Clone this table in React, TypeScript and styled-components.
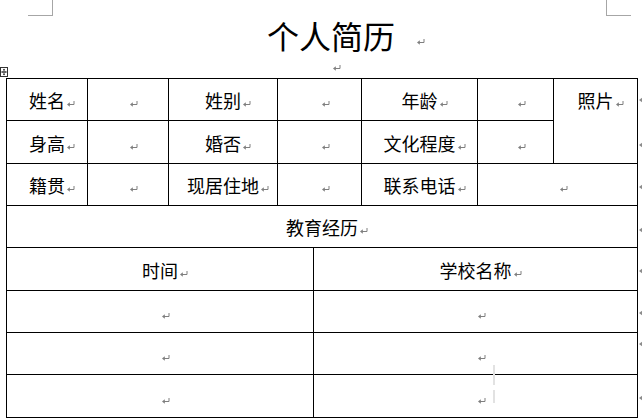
import React from "react";
import styled, { createGlobalStyle } from "styled-components";

const GlobalStyle = createGlobalStyle`
  html, body { margin: 0; padding: 0; background: #ffffff; }
  body { font-family: "Noto Sans CJK SC", "Noto Sans", sans-serif; color: #000; }
  * { box-sizing: border-box; }
`;

const Page = styled.div`
  position: relative;
  width: 642px;
  height: 418px;
  overflow: hidden;
  background: #ffffff;
`;

const CropMark = styled.div<{ $side: "left" | "right" }>`
  position: absolute;
  top: 0;
  width: 25px;
  height: 16px;
  border-bottom: 1px solid #a6a6a6;
  ${(p) =>
    p.$side === "left"
      ? "left: 28px; border-right: 1px solid #a6a6a6;"
      : "left: 606px; border-left: 1px solid #a6a6a6;"}
`;

const Header = styled.div`
  padding: 19px 0 0 20px;
  text-align: center;
`;

const Title = styled.h1`
  margin: 0;
  font-size: 32px;
  line-height: 32px;
  font-weight: 400;
  font-family: "Noto Sans CJK SC", sans-serif;
`;

const BlankLine = styled.div`
  height: 27px;
  font-size: 18px;
  line-height: 27px;
`;

const MarkSvg = styled.svg<{ $gap: number }>`
  display: inline-block;
  width: 8px;
  height: 6px;
  margin-left: ${(p) => p.$gap}px;
  margin-right: ${(p) => -(8 + p.$gap)}px;
  vertical-align: ${(p) => (p.$gap > 10 ? "4px" : "1px")};
`;

const Mark = ({ gap = 2 }: { gap?: number }) => (
  <MarkSvg $gap={gap} viewBox="0 0 8 6">
    <path d="M7 0 V3.5 H2" stroke="#7f7f7f" strokeWidth="1" fill="none" />
    <path d="M0 3.5 L2.8 1.2 L2.8 5.8 Z" fill="#7f7f7f" />
  </MarkSvg>
);

const Table = styled.div`
  margin-left: 6px;
  width: 632px;
  border-left: 1px solid #000;
`;

const InfoGrid = styled.div`
  display: grid;
  grid-template-columns: 81px 81px 109px 84px 116px 76px 84px;
  grid-template-rows: 42px 43px 42px;
  border-top: 1px solid #000;
`;

const EduGrid = styled.div`
  display: grid;
  grid-template-columns: 307px 324px;
  grid-template-rows: 42px 43px 42px 42px 43px;
`;

const Cell = styled.div<{ $span?: string; $rows?: number }>`
  display: flex;
  align-items: center;
  justify-content: center;
  border-right: 1px solid #000;
  border-bottom: 1px solid #000;
  font-size: 18px;
  line-height: 18px;
  padding-top: 1px;
  ${(p) => (p.$span ? `grid-column: ${p.$span};` : "")}
  ${(p) => (p.$rows ? `grid-row: span ${p.$rows}; align-items: flex-start; padding-top: 12px;` : "")}
`;

const CellText = styled.span`
  display: inline-block;
  white-space: nowrap;
`;

const TableHandle = styled.svg`
  position: absolute;
  left: 0;
  top: 67px;
  width: 8px;
  height: 10px;
`;

const RowEnd = styled.div<{ $y: number }>`
  position: absolute;
  left: 639px;
  top: ${(p) => p.$y}px;
  width: 0;
  height: 0;
  border-top: 3px solid transparent;
  border-bottom: 3px solid transparent;
  border-right: 4px solid #8c8c8c;
`;

const Caret = styled.div<{ $y: number; $h: number }>`
  position: absolute;
  left: 493px;
  top: ${(p) => p.$y}px;
  width: 2px;
  height: ${(p) => p.$h}px;
  background: #e2e2e2;
`;

const C = ({
  text = "",
  span,
  rows,
}: {
  text?: string;
  span?: string;
  rows?: number;
}) => (
  <Cell $span={span} $rows={rows}>
    <CellText>
      {text}
      <Mark />
    </CellText>
  </Cell>
);

const rowEndYs = [97, 142, 184, 227, 268, 310, 341, 395];

export default function App() {
  return (
    <>
      <GlobalStyle />
      <Page>
        <CropMark $side="left" />
        <CropMark $side="right" />
        <Header>
          <Title>
            个人简历
            <Mark gap={22} />
          </Title>
          <BlankLine>
            <Mark />
          </BlankLine>
        </Header>
        <TableHandle viewBox="0 0 8 10">
          <rect x="0.5" y="0.5" width="7" height="9" fill="#fff" stroke="#333" />
          <path d="M4 2 V8 M1.5 5 H6.5" stroke="#333" strokeWidth="1" />
          <path d="M4 1.5 L3 3 H5 Z M4 8.5 L3 7 H5 Z M1.2 5 L2.6 4 V6 Z M6.8 5 L5.4 4 V6 Z" fill="#333" />
        </TableHandle>
        <Table>
          <InfoGrid>
            <C text="姓名" />
            <C />
            <C text="姓别" />
            <C />
            <C text="年龄" />
            <C />
            <C text="照片" rows={2} />
            <C text="身高" />
            <C />
            <C text="婚否" />
            <C />
            <C text="文化程度" />
            <C />
            <C text="籍贯" />
            <C />
            <C text="现居住地" />
            <C />
            <C text="联系电话" />
            <C span="6 / 8" />
          </InfoGrid>
          <EduGrid>
            <C text="教育经历" span="1 / -1" />
            <C text="时间" />
            <C text="学校名称" />
            <C />
            <C />
            <C />
            <C />
            <C />
            <C />
          </EduGrid>
        </Table>
        {rowEndYs.map((y) => (
          <RowEnd key={y} $y={y} />
        ))}
        <Caret $y={365} $h={20} />
        <Caret $y={390} $h={13} />
      </Page>
    </>
  );
}
